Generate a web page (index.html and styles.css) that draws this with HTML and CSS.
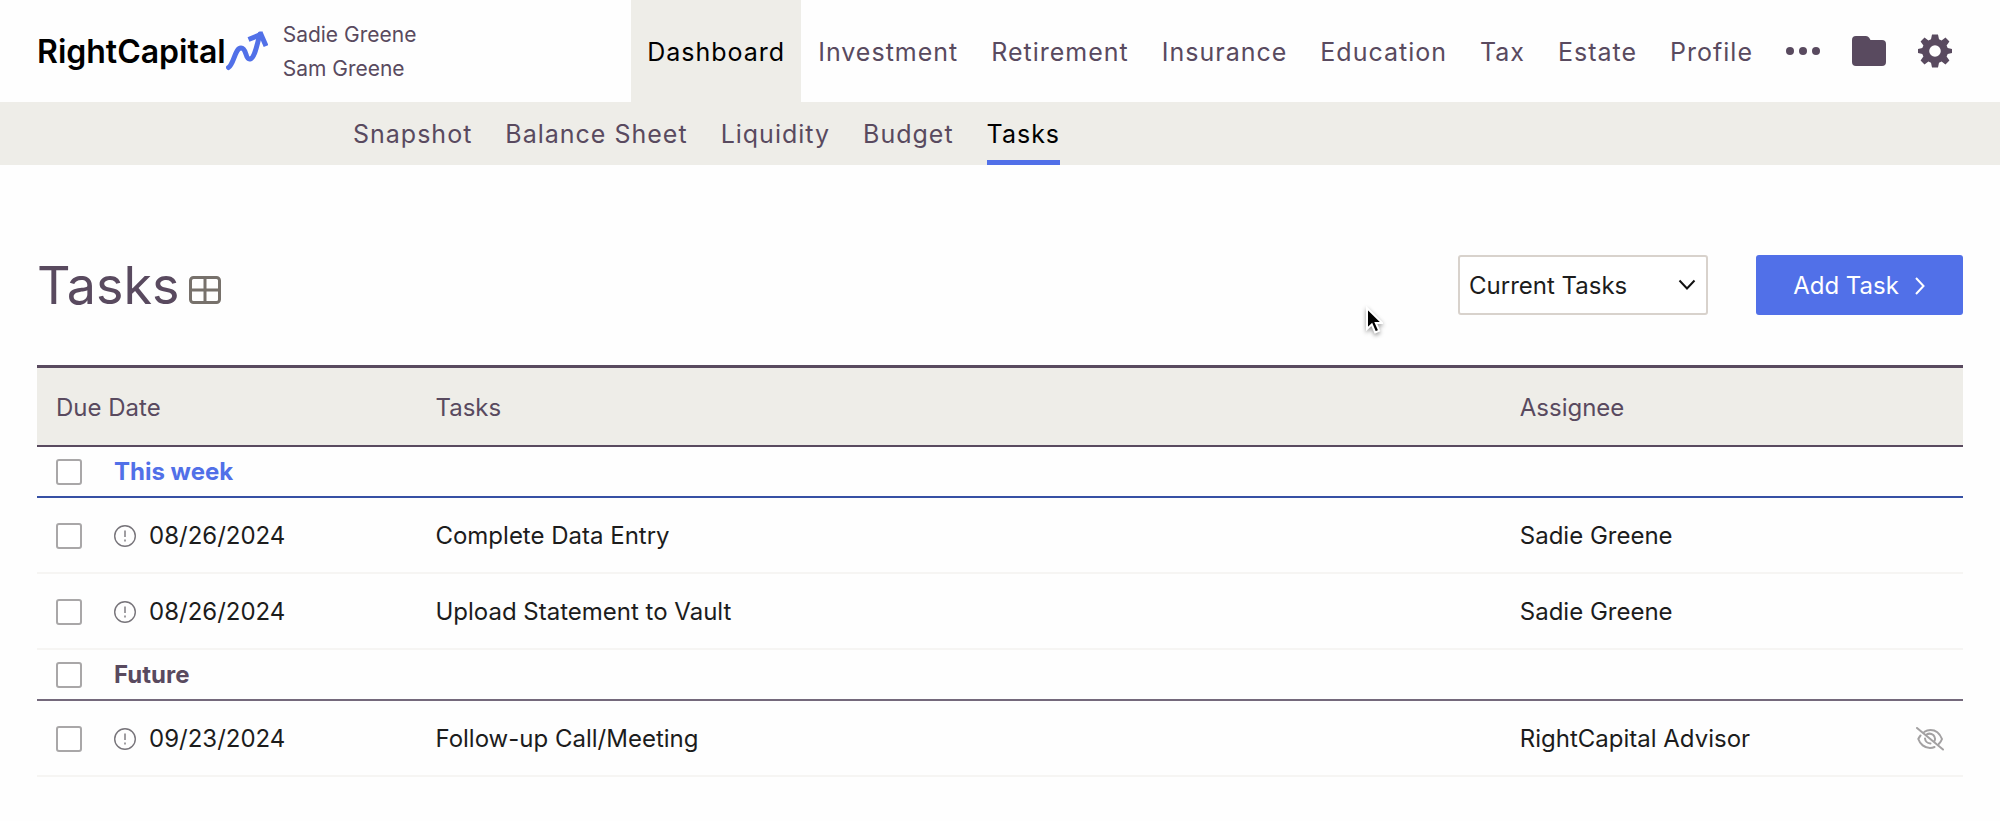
FILE: index.html
```html
<!DOCTYPE html>
<html lang="en">
<head>
<meta charset="utf-8">
<title>Tasks - RightCapital</title>
<link rel="stylesheet" href="styles.css">
</head>
<body>
<header class="topbar">
  <a class="logo" href="#">
    <span class="logo-name">RightCapital</span>
    <svg class="logo-mark" viewBox="0 0 42 40" aria-hidden="true"><path d="M2.500 36.500C8 33 9 17 15 17S19 29 24 28S31 13 34 3"/><path class="logo-head" d="M22.500 8.500L35 3.500L40 15"/></svg>
  </a>
  <div class="clients"><span>Sadie Greene</span><span>Sam Greene</span></div>
  <nav class="main-nav" aria-label="Main">
    <a class="nav-item active" href="#">Dashboard</a>
    <a class="nav-item" href="#">Investment</a>
    <a class="nav-item" href="#">Retirement</a>
    <a class="nav-item" href="#">Insurance</a>
    <a class="nav-item" href="#">Education</a>
    <a class="nav-item" href="#">Tax</a>
    <a class="nav-item" href="#">Estate</a>
    <a class="nav-item" href="#">Profile</a>
    <button class="nav-icon" aria-label="More"><svg viewBox="0 0 34 34"><circle cx="4" cy="17" r="4"/><circle cx="17" cy="17" r="4"/><circle cx="30" cy="17" r="4"/></svg></button>
    <button class="nav-icon" aria-label="Vault"><svg viewBox="0 0 34 34"><path d="M4 2h10q2 0 3.200 1.800L18.500 6H30q4 0 4 4v18q0 4-4 4H4q-4 0-4-4V6q0-4 4-4z"/></svg></button>
    <button class="nav-icon" aria-label="Settings"><svg viewBox="0 0 34 34"><path fill-rule="evenodd" d="M14 0.500h6l1 4.800 2.600 1.100 3.900-2.800 3.900 3.900-2.800 3.900 1.100 2.600 4.300 1v4l-4.300 1-1.100 2.600 2.800 3.900-3.900 3.900-3.900-2.800-2.600 1.100-1 4.800h-6l-1-4.800-2.600-1.100-3.900 2.800-3.900-3.900 2.800-3.900-1.100-2.600-4.300-1v-4l4.300-1 1.100-2.600-2.800-3.900 3.900-3.900 3.900 2.800 2.600-1.100zM17 11.200a5.800 5.800 0 1 0 0 11.600a5.800 5.800 0 1 0 0-11.600z"/></svg></button>
  </nav>
</header>
<nav class="sub-nav" aria-label="Dashboard">
  <a href="#">Snapshot</a>
  <a href="#">Balance Sheet</a>
  <a href="#">Liquidity</a>
  <a href="#">Budget</a>
  <a class="active" href="#">Tasks</a>
</nav>
<main class="page">
  <div class="page-head">
    <h1>Tasks</h1>
    <button class="grid-button" aria-label="Task templates"><svg viewBox="0 0 32 28"><rect x="1.500" y="1.500" width="29" height="25" rx="3"/><path d="M16 1.500v25M1.500 14h29"/></svg></button>
    <div class="actions">
      <div class="select-wrap">
        <select aria-label="Task filter"><option>Current Tasks</option><option>Completed Tasks</option></select>
        <svg viewBox="0 0 18 12" aria-hidden="true"><path d="M1.500 1.500L9 9.500L16.500 1.500"/></svg>
      </div>
      <button class="add-button">Add Task<svg viewBox="0 0 12 18" aria-hidden="true"><path d="M2 1l7.500 8L2 17"/></svg></button>
    </div>
  </div>
  <table class="tasks">
    <thead>
      <tr><th class="col-date">Due Date</th><th class="col-task">Tasks</th><th class="col-who">Assignee</th></tr>
    </thead>
    <tbody>
      <tr class="group current"><td colspan="3"><label class="line"><input type="checkbox"><span>This week</span></label></td></tr>
      <tr>
        <td><label class="line"><input type="checkbox"><span class="due"><svg viewBox="0 0 22 22" aria-hidden="true"><circle cx="11" cy="11" r="10.300"/><path d="M11 5.500v6.500M11 14.500v2"/></svg>08/26/2024</span></label></td>
        <td>Complete Data Entry</td><td>Sadie Greene</td>
      </tr>
      <tr>
        <td><label class="line"><input type="checkbox"><span class="due"><svg viewBox="0 0 22 22" aria-hidden="true"><circle cx="11" cy="11" r="10.300"/><path d="M11 5.500v6.500M11 14.500v2"/></svg>08/26/2024</span></label></td>
        <td>Upload Statement to Vault</td><td>Sadie Greene</td>
      </tr>
      <tr class="group"><td colspan="3"><label class="line"><input type="checkbox"><span>Future</span></label></td></tr>
      <tr>
        <td><label class="line"><input type="checkbox"><span class="due"><svg viewBox="0 0 22 22" aria-hidden="true"><circle cx="11" cy="11" r="10.300"/><path d="M11 5.500v6.500M11 14.500v2"/></svg>09/23/2024</span></label></td>
        <td>Follow-up Call/Meeting</td>
        <td><div class="who"><span>RightCapital Advisor</span><svg class="hidden-icon" viewBox="0 0 28 24" role="img" aria-label="Hidden from client"><path d="M1 1l26 21.500M8.500 4.800Q11 3 14.500 3C20 3 24 7 26 12Q25 14.700 23 16.800M4.500 8.500Q3 10.300 2.300 12C4 17 8.500 21 14 21Q16.500 21 18.500 20M10.500 7.500Q14 5.500 17.300 8Q20 11 18.500 14M9 11.500Q9.500 16 14.500 16.500"/></svg></div></td>
      </tr>
    </tbody>
  </table>
</main>
<svg class="cursor" viewBox="0 0 18 30" aria-hidden="true"><path d="M2 2v21l4.800-4.600 3.400 8 4-1.700-3.400-7.800H17z"/></svg>
</body>
</html>
```

FILE: styles.css
```css
* { box-sizing: border-box; }
body {
  margin: 0;
  background: #fefefe;
  color: #1c1c1c;
  font: 24px/32px Inter, "Liberation Sans", sans-serif;
}
a { color: inherit; text-decoration: none; }
button, select { font: inherit; color: inherit; cursor: pointer; }
button { border: 0; padding: 0; background: none; }
svg { display: block; flex: none; }

.topbar { display: flex; align-items: center; height: 102px; padding: 0 32px 0 37px; color: #594a5f; }
.logo { display: flex; align-items: center; }
.logo-name { padding-top: 2px; color: #000; font-size: 32px; font-weight: 600; }
.logo-mark { width: 42px; height: 40px; fill: none; stroke: #5170e8; stroke-width: 5; stroke-linecap: round; }
.logo-head { stroke-linecap: butt; }
.clients { display: flex; flex-direction: column; margin-left: 15px; padding-top: 2px; font-size: 21px; line-height: 34px; }
.main-nav { display: flex; align-self: stretch; margin-left: auto; font-size: 25px; letter-spacing: 1px; }
.nav-item { display: flex; align-items: center; margin-right: 1px; padding: 2px 16px 0; }
.nav-item.active { background: #eeede8; color: #000; }
.nav-icon { display: flex; align-items: center; padding: 0 16px; }
.nav-icon svg { width: 34px; height: 34px; fill: #594a5f; }

.sub-nav { display: flex; gap: 33px; height: 63px; padding-left: 353px; background: #eeede8; color: #594a5f; font-size: 25px; letter-spacing: 1px; }
.sub-nav a { padding-top: 16px; border-bottom: 5px solid transparent; }
.sub-nav .active { color: #000; border-color: #5170e8; }

.page { padding: 88px 37px 0; }
.page-head { display: flex; align-items: center; height: 64px; margin-bottom: 48px; }
h1 { margin: 0; padding-top: 2px; color: #594a5f; font-size: 52px; line-height: 64px; font-weight: 400; }
.grid-button { margin: 10px 0 0 10px; }
.grid-button svg { width: 32px; height: 28px; fill: none; stroke: #77716b; stroke-width: 3; }
.actions { display: flex; gap: 48px; margin-left: auto; }
.select-wrap { display: grid; align-items: center; width: 250px; height: 60px; }
.select-wrap > * { grid-area: 1 / 1; }
select { width: 100%; height: 100%; padding: 2px 9px 0; border: 2px solid #d8d2cc; border-radius: 3px; background: #fff; appearance: none; }
.select-wrap svg { justify-self: end; width: 18px; height: 12px; margin-right: 12px; fill: none; stroke: #111; stroke-width: 2; pointer-events: none; }
.add-button { display: flex; align-items: center; justify-content: center; gap: 15px; width: 207px; height: 60px; padding-top: 2px; border-radius: 3px; background: #5170e8; color: #fff; }
.add-button svg { width: 12px; height: 18px; fill: none; stroke: #fff; stroke-width: 2; }

.tasks { width: 100%; border-collapse: separate; border-spacing: 0; table-layout: fixed; border-top: 3px solid #594a5f; }
.col-date { width: 19.700%; }
.col-task { width: 56.300%; }
th, td { padding: 2px 19px 0; text-align: left; font-weight: 400; }
th { height: 79px; background: #eeede8; color: #594a5f; border-bottom: 2px solid #594a5f; }
td { height: 76px; border-bottom: 2px solid #f6f5f3; }
.group td { height: 51px; padding-top: 0; border-color: #74697c; color: #594a5f; font-weight: 700; }
.group.current td { border-color: #3650a4; color: #5170e8; }
.line { display: flex; align-items: center; gap: 32px; }
.line input { flex: none; width: 26px; height: 26px; margin: 0; border: 2px solid #a9a7a8; border-radius: 3px; background: #fff; appearance: none; }
.line input:checked { background: #5170e8; }
.due { display: flex; align-items: center; gap: 13px; }
.due svg { width: 22px; height: 22px; fill: none; stroke: #77747a; stroke-width: 1.400; }
.who { display: flex; align-items: center; justify-content: space-between; }
.hidden-icon { width: 28px; height: 24px; fill: none; stroke: #a3a1a2; stroke-width: 2; stroke-linecap: round; }

.cursor { position: absolute; left: 1365px; top: 306px; width: 18px; height: 30px; fill: #000; stroke: #fff; stroke-width: 2; filter: drop-shadow(0 2px 2px #0006); pointer-events: none; }
```
